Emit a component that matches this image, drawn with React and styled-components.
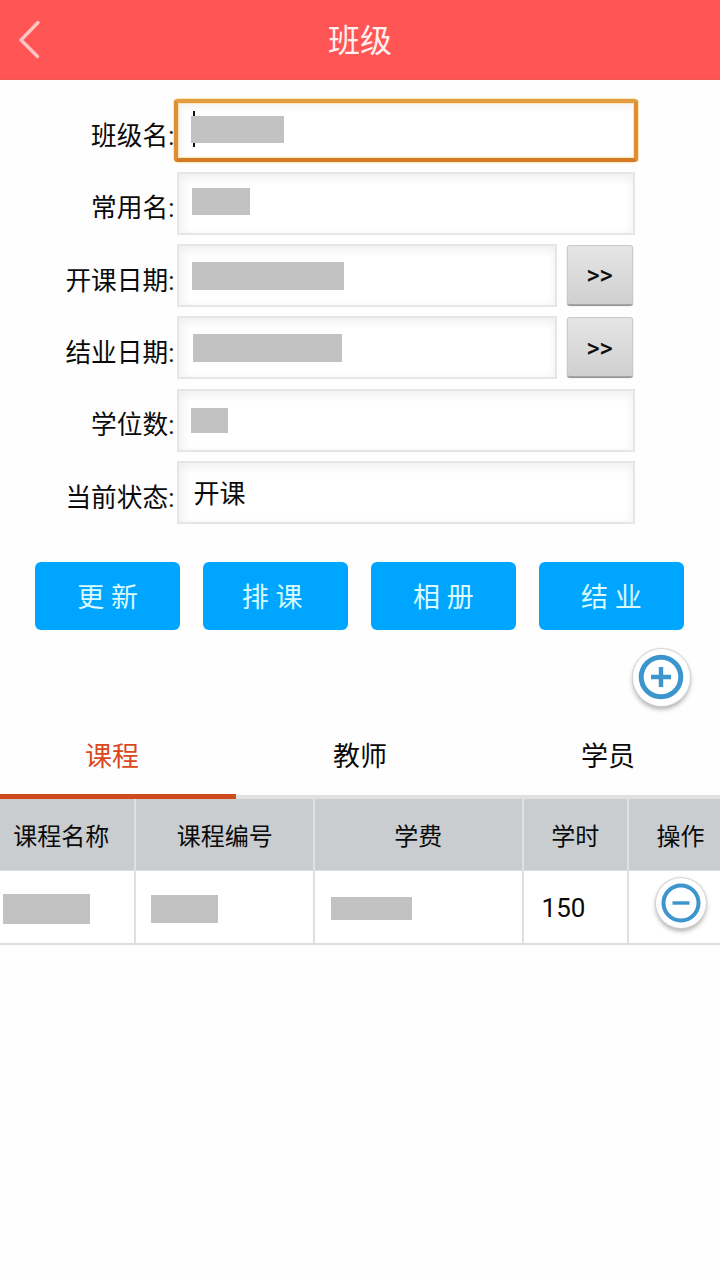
import styled, { createGlobalStyle, css } from "styled-components";

const GlobalStyle = createGlobalStyle`
  * {
    box-sizing: border-box;
  }

  body {
    margin: 0;
    background-color: #fefefe;
    color: #0a0a0a;
    font-family: Roboto, "Noto Sans CJK SC", sans-serif;
  }

  button {
    padding: 0;
    border: none;
    font-family: inherit;
  }
`;

const Page = styled.div`
  width: 720px;
  min-height: 1280px;
  overflow: hidden;
`;

const Header = styled.header`
  display: grid;
  grid-template-columns: 80px 1fr 80px;
  align-items: center;
  height: 80px;
  background-color: #ff5555;
  border-bottom: 1px solid #ee5757;
`;

const BackButton = styled.button`
  display: flex;
  height: 79px;
  padding-left: 17px;
  align-items: center;
  background: none;
`;

const Title = styled.h1`
  margin: 0;
  padding-top: 3px;
  color: #fff0f0;
  font-size: 32px;
  font-weight: 400;
  line-height: 44px;
  text-align: center;
`;

const Form = styled.form`
  display: grid;
  grid-auto-rows: 72.4px;
  padding-top: 19.2px;
`;

const FormRow = styled.div`
  display: flex;
  align-items: flex-start;
`;

const Label = styled.label`
  width: 177.4px;
  padding: 17.6px 3px 0 0;
  font-size: 25.7px;
  line-height: 38px;
  text-align: right;
  white-space: nowrap;
`;

const focused = css`
  width: 464px;
  height: 63px;
  margin-left: -3.5px;
  padding-left: 13px;
  border: 4px solid;
  border-color: #e29c41 #de8f35 #d37c26 #de8f35;
  border-radius: 4px;
  box-shadow: 0 0 1px 1px #ffe3b4, inset 0 0 1px 1px #ffe3b4, inset 3px 4px 8px #f4f4f4;
`;

const Field = styled.div`
  display: flex;
  width: ${(props) => (props.$short ? "379.4px" : "457.6px")};
  height: 63px;
  padding-left: 13px;
  background-color: #fff;
  border: 2px solid #e6e6e6;
  box-shadow: inset 4px 5px 9px #f1f1f1, inset -3px 0 6px #f6f6f6;
  ${(props) => props.$focused && focused}
`;

const Mask = styled.span`
  display: block;
  flex: none;
  width: ${(props) => props.$width}px;
  height: ${(props) => props.$height}px;
  margin-top: ${(props) => props.$top || 0}px;
  margin-left: ${(props) => props.$left || 0}px;
  background-color: #c2c2c2;
`;

const Caret = styled.span`
  width: 2px;
  height: 36px;
  margin: 8px -4px 0 2px;
  background-color: #111;
`;

const FieldText = styled.span`
  padding: 12px 0 0 1px;
  font-size: 26px;
  line-height: 38px;
`;

const PickButton = styled.button`
  width: 66px;
  height: 60px;
  margin: 1px 0 0 9.8px;
  padding-top: 2px;
  background-image: linear-gradient(#e5e5e5, #d0d0d0);
  border: 1px solid #c9c9c9;
  border-bottom-color: #a4a4a4;
  border-radius: 3px;
  box-shadow: 0 1px 1px #8c8c8c;
  color: #0a0a0a;
  font-size: 25px;
  font-weight: 400;
  -webkit-text-stroke: 0.2px #0a0a0a;
`;

const Actions = styled.div`
  display: grid;
  grid-template-columns: repeat(4, 145.3px);
  column-gap: 22.6px;
  padding: 28.4px 35px 0;
`;

const ActionButton = styled.button`
  height: 68px;
  padding-top: 5px;
  background-color: #00a5ff;
  border-radius: 6px;
  color: #d9fbff;
  font-size: 27px;
  line-height: 63px;
`;

const ActionText = styled.span`
  margin-right: ${(props) => props.$shift || 0}px;
`;

const AddBar = styled.div`
  display: flex;
  justify-content: flex-end;
  height: 86px;
  padding: 19px 30.5px 0 0;
`;

const RoundButton = styled.button`
  display: flex;
  width: ${(props) => props.$size}px;
  height: ${(props) => props.$size}px;
  align-items: center;
  justify-content: center;
  background-color: #fff;
  border-radius: 50%;
  box-shadow: 0 0 1px 1px #d2d2d2, 0 3px 5px rgba(0, 0, 0, 0.35);
`;

const Tabs = styled.nav`
  display: grid;
  grid-template-columns: repeat(3, 1fr);
  width: 744px;
  margin-left: -12px;
`;

const Tab = styled.button`
  display: flex;
  flex-direction: column;
  height: 83px;
  padding-top: 21px;
  align-items: center;
  justify-content: space-between;
  background: none;
  color: ${(props) => (props.$active ? "#d9491c" : "#0a0a0a")};
  font-size: 27px;
  line-height: 40px;

  &::after {
    content: "";
    width: 100%;
    height: ${(props) => (props.$active ? 5 : 4)}px;
    background-color: ${(props) => (props.$active ? "#d04a20" : "#e0e0e0")};
  }
`;

const Table = styled.div`
  width: 744px;
  margin-left: -12px;
`;

const TableRow = styled.div`
  display: grid;
  grid-template-columns: 148.4px 178.6px 208.6px 105.4px 103px;
  height: ${(props) => (props.$head ? 72 : 74)}px;
  background-color: ${(props) => (props.$head ? "#c9cdd0" : "#fff")};
  border-bottom: ${(props) => (props.$head ? "1px" : "2px")} solid #dedede;
`;

const Cell = styled.div`
  display: flex;
  padding-left: ${(props) => props.$indent || 0}px;
  padding-bottom: ${(props) => props.$raise || 0}px;
  align-items: center;
  justify-content: ${(props) => (props.$center ? "center" : "flex-start")};
  border-right: 2px solid #e0e0e0;
  font-size: ${(props) => (props.$center ? 24 : 26)}px;

  &:last-child {
    border-right: none;
  }
`;

const HoursText = styled.span`
  padding-top: 3px;
`;

const fields = [
  { label: "班级名", focused: true, mask: { $width: 93, $height: 27, $top: 13 } },
  { label: "常用名", mask: { $width: 58, $height: 27, $top: 14 } },
  { label: "开课日期", picker: true, mask: { $width: 152, $height: 28, $top: 16 } },
  { label: "结业日期", picker: true, mask: { $width: 149, $height: 28, $top: 15.5, $left: 1 } },
  { label: "学位数", mask: { $width: 37, $height: 25, $top: 17, $left: -1.5 } },
  { label: "当前状态", text: "开课" },
];

const actions = [
  { text: "更 新" },
  { text: "排 课", shift: 7 },
  { text: "相 册" },
  { text: "结 业" },
];
const tabs = ["课程", "教师", "学员"];
const columns = ["课程名称", "课程编号", "学费", "学时", "操作"];

const BackIcon = () => (
  <svg width="26" height="42" viewBox="0 0 26 42" fill="none">
    <path
      d="M21 3.5L4 21L20.5 37.5"
      stroke="#ffc5c5"
      strokeWidth="3.4"
      strokeLinecap="round"
      strokeLinejoin="round"
    />
  </svg>
);

const PlusIcon = () => (
  <svg width="46" height="46" viewBox="0 0 46 46" fill="none" stroke="#3d95ce">
    <circle cx="23" cy="23" r="19.8" strokeWidth="5" />
    <path d="M13 23H33M23 13V33" strokeWidth="4.4" />
  </svg>
);

const MinusIcon = () => (
  <svg width="42" height="42" viewBox="0 0 42 42" fill="none" stroke="#3d95ce">
    <circle cx="21" cy="21" r="17.5" strokeWidth="4" />
    <path d="M12.5 21H29.5" strokeWidth="3.4" />
  </svg>
);

const App = () => {
  return (
    <Page>
      <GlobalStyle />
      <Header>
        <BackButton type="button">
          <BackIcon />
        </BackButton>
        <Title>班级</Title>
      </Header>
      <Form>
        {fields.map((field) => (
          <FormRow key={field.label}>
            <Label>{field.label}:</Label>
            <Field $short={field.picker} $focused={field.focused}>
              {field.focused && <Caret />}
              {field.mask && <Mask {...field.mask} />}
              {field.text && <FieldText>{field.text}</FieldText>}
            </Field>
            {field.picker && <PickButton type="button">&gt;&gt;</PickButton>}
          </FormRow>
        ))}
      </Form>
      <Actions>
        {actions.map((action) => (
          <ActionButton key={action.text} type="button">
            <ActionText $shift={action.shift}>{action.text}</ActionText>
          </ActionButton>
        ))}
      </Actions>
      <AddBar>
        <RoundButton type="button" $size={57}>
          <PlusIcon />
        </RoundButton>
      </AddBar>
      <Tabs>
        {tabs.map((tab, i) => (
          <Tab key={tab} type="button" $active={i === 0}>
            {tab}
          </Tab>
        ))}
      </Tabs>
      <Table>
        <TableRow $head>
          {columns.map((column) => (
            <Cell key={column} $center>
              {column}
            </Cell>
          ))}
        </TableRow>
        <TableRow>
          <Cell $indent={15}>
            <Mask $width={87} $height={30} $top={4} />
          </Cell>
          <Cell $indent={14.5}>
            <Mask $width={67} $height={28} $top={4} />
          </Cell>
          <Cell $indent={16}>
            <Mask $width={81} $height={23} $top={3} />
          </Cell>
          <Cell $indent={18}>
            <HoursText>150</HoursText>
          </Cell>
          <Cell $indent={27} $raise={7}>
            <RoundButton type="button" $size={50}>
              <MinusIcon />
            </RoundButton>
          </Cell>
        </TableRow>
      </Table>
    </Page>
  );
};

export default App;
